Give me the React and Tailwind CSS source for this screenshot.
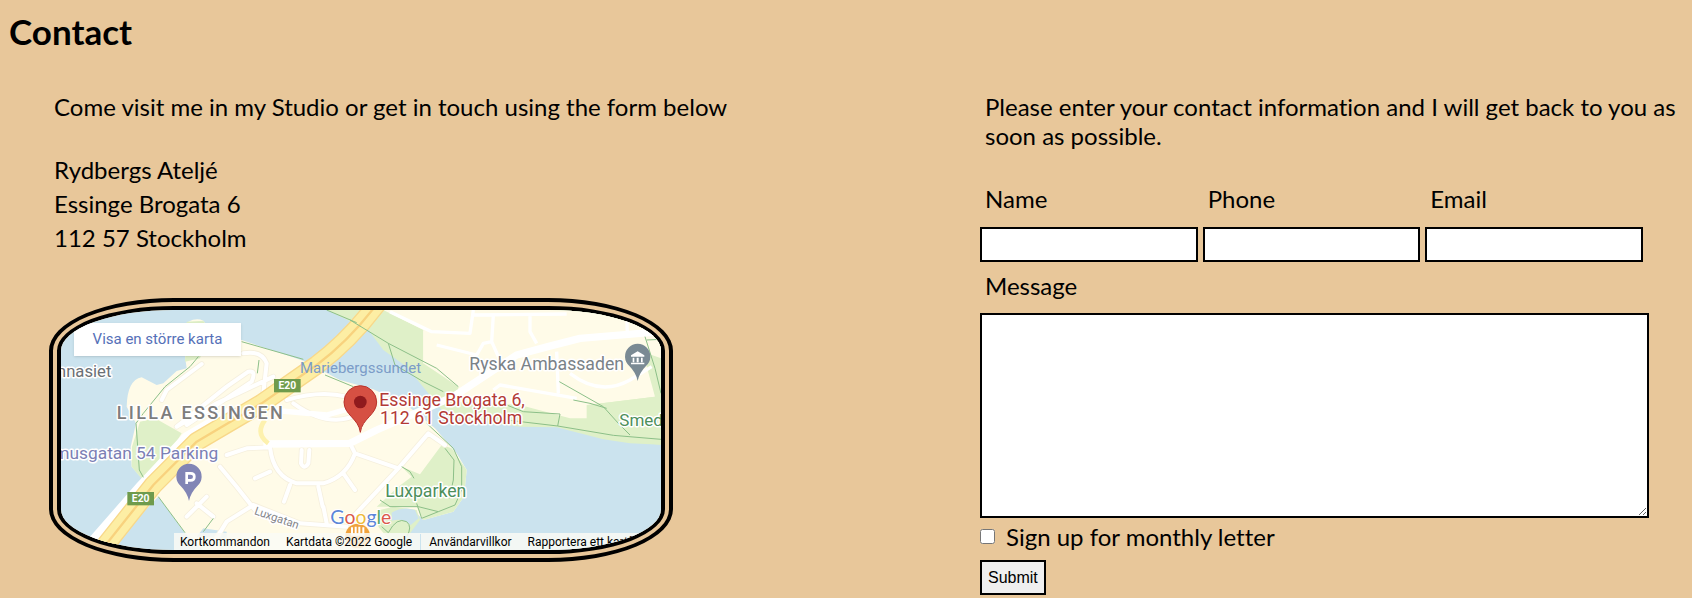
const halo = { paintOrder: "stroke", stroke: "#ffffff", strokeWidth: 9, strokeLinejoin: "round" };

const streets =
  "M485 222 L380 300 L365 330 M610 190 Q665 180 680 220 L670 310 L700 370 M410 410 L560 290 L625 245 Q650 240 635 275 L440 405 M410 410 L530 340 L700 260 M540 530 L590 590 L645 660 M640 645 L560 695 L520 760 M640 645 L780 700 L920 710 M560 495 L620 475 L690 472 Q700 560 770 580 L850 580 Q920 560 945 490 L930 460 M750 585 L732 635 M690 545 L645 565 M835 590 L848 650 M910 550 L945 600 M785 480 L783 520 Q793 540 805 520 L808 480 M760 340 Q870 420 960 370 M740 330 Q840 300 920 320 M500 620 L440 680 M470 640 L520 680 M945 490 L1075 535 L930 690 M1075 535 L1165 430 L1215 465 M850 650 L860 700";

function Shield({ x, y }) {
  return (
    <g>
      <rect x={x} y={y} width="80" height="40" fill="#6f9b4c" />
      <text x={x + 40} y={y + 31} fontSize="31" fontWeight="700" fill="#fff" textAnchor="middle">E20</text>
    </g>
  );
}

function MapDrawing() {
  return (
    <svg viewBox="63 60 1800 720" preserveAspectRatio="xMidYMid slice" className="block h-full w-full" fontFamily="Roboto, sans-serif" role="img" aria-label="Karta över Lilla Essingen">
      <rect x="63" y="60" width="1800" height="720" fill="#cbe3ee" />
      <path d="M445 95 Q470 82 490 92 L520 130 L605 150 L790 212 L900 270 L1000 298 L1100 345 L1185 415 L1250 490 L1280 540 L1272 620 L1240 665 L1150 690 L1120 660 L1060 680 L1030 730 L1110 690 L1115 720 L1060 790 L500 790 L435 730 L355 620 L190 790 L130 790 L310 570 L275 530 L272 470 L288 400 L260 350 Q262 270 305 262 L350 285 L370 280 L410 243 L440 235 L435 200 Z" fill="#fffbe8" />
      <path d="M300 395 L345 385 L425 430 L400 470 L310 572 L275 530 L276 470 Z M1085 530 L1140 553 L1205 465 L1235 475 L1280 540 L1272 620 L1240 665 L1150 690 L1130 650 L1010 650 L1075 590 L1115 560 Z M440 95 L490 92 L510 120 L480 205 L435 215 Z" fill="#dff0c8" />
      <path d="M920 60 L1863 60 L1863 464 L1770 460 L1690 448 L1550 412 L1440 410 L1225 385 L1165 310 L1100 230 L1030 180 L985 120 L860 60 Z" fill="#dff0c8" />
      <path d="M1030 60 L1863 60 L1863 280 L1845 320 L1640 345 L1640 385 L1590 385 L1440 345 L1250 335 L1255 290 L1150 220 L1150 120 Z" fill="#fffbe8" />
      <path d="M1808 185 L1863 205 L1863 464 L1770 455 L1640 400 L1645 345 L1845 320 Z" fill="#dff0c8" />
      <path d="M1150 120 L1230 210 L1150 220 Z" fill="#fffbe8" />
      <path d="M490 715 L560 725 L560 745 L470 740 Z" fill="#cbe3ee" />
      <path d="M1020 660 L1060 650 L1130 660 L1140 690 L1110 730 L1060 760 L1040 740 L1015 710 Z" fill="#dff0c8" />
      <path d="M1055 668 Q1090 648 1125 660 L1136 685 L1112 705 Q1090 682 1055 692 Z" fill="#cbe3ee" />

      <path d={streets} fill="none" stroke="#f6f0de" strokeWidth="17" strokeLinecap="round" strokeLinejoin="round" />
      <path d={streets} fill="none" stroke="#fff" strokeWidth="12" strokeLinecap="round" strokeLinejoin="round" />
      <path d="M1050 65 L1175 125 L1290 130 L1300 60 M1300 75 L1580 72 M1360 75 L1355 155 L1330 160 L1310 195 L1190 165 M1355 155 L1375 200 M1470 75 L1470 125 L1490 160 M1550 185 L1555 310 M1590 250 Q1680 320 1770 270 L1835 230 M1360 300 L1380 285 L1610 325 M1760 60 L1762 135" fill="none" stroke="#fff" strokeWidth="10" strokeLinejoin="round" />
      <path d="M670 462 L930 460 L1010 420 L1240 320 L1430 195 Q1520 170 1620 145 L1863 125" fill="none" stroke="#fff" strokeWidth="22" strokeLinejoin="round" />
      <path d="M690 360 L860 375 L930 355" fill="none" stroke="#fff" strokeWidth="16" />
      <path d="M675 390 Q645 430 685 460" fill="none" stroke="#fdf1ae" strokeWidth="14" />
      <path d="M125 790 L300 590 L440 440 L570 365" fill="none" stroke="#fff" strokeWidth="28" />
      <g fill="none" strokeLinejoin="round">
        <path d="M1012 40 Q930 150 830 225 L665 340 L470 455 L340 585 L185 780" stroke="#f8d88a" strokeWidth="58" />
        <path d="M1012 40 Q930 150 830 225 L665 340 L470 455 L340 585 L185 780" stroke="#fdeea4" strokeWidth="50" />
        <path d="M1012 40 Q930 150 830 225 L665 340 L470 455 L340 585 L185 780" stroke="#f8d27e" strokeWidth="7" />
      </g>
      <g fill="none" stroke="#8cbf88" strokeWidth="3">
        <path d="M860 60 L950 98 M605 155 L790 208 M855 255 L940 290 M657 210 L652 250 M475 200 L450 230 L375 290 L310 370 L288 400 L298 540 L310 562 M355 620 L435 728 M520 685 L490 725" />
        <path d="M930 90 L1045 160 L1190 235 L1255 290 M1045 160 L1065 225 L1150 275 L1210 305 M1558 275 L1690 350 L1735 400 L1770 435 M1600 330 L1650 340 L1700 355 M1400 345 L1450 365 L1560 372 L1553 408 L1400 390 M1553 408 L1720 436 L1863 448 M1815 140 L1845 235 L1863 310 M1820 150 L1863 148" />
        <path d="M1160 400 L1240 475 L1265 530 L1265 600 L1245 645 L1195 665 L1135 650 L1050 650 L1020 630 M1195 665 L1145 685 L1130 640 M1215 475 L1242 510 L1240 570 L1228 625 M1085 530 L1110 545 L1122 565 M1025 710 L1045 728 Q1070 680 1100 695 Q1118 710 1100 740" />
      </g>

      <text x="214" y="261" fontSize="50" fill="#6b7075" style={halo} textAnchor="end">Gymnasiet</text>
      <text x="230" y="387" fontSize="54" fontWeight="500" fill="#7d7d7d" style={halo} letterSpacing="7">LILLA ESSINGEN</text>
      <text x="535" y="508" fontSize="52" fill="#7b80b4" style={halo} textAnchor="end">Primusgatan 54 Parking</text>
      <text x="780" y="249" fontSize="45" fill="#7b9cc8">Mariebergssundet</text>
      <text x="1288" y="240" fontSize="53" fill="#7a8287" style={halo}>Ryska Ambassaden</text>
      <text x="1738" y="407" fontSize="51" fill="#4d8f5b" style={halo}>Smedsudden</text>
      <text x="1036" y="621" fontSize="53" fill="#4d8f5b" style={halo}>Luxparken</text>
      <text transform="translate(641 672) rotate(19)" fontSize="34" fill="#85868a" style={halo}>Luxgatan</text>
      <text x="1018" y="348" fontSize="53" fill="#b33a35" style={halo}>Essinge Brogata 6,</text>
      <text x="1020" y="402" fontSize="53" fill="#b33a35" style={halo}>112 61 Stockholm</text>
      <Shield x={702} y={267} />
      <Shield x={262} y={606} />

      <path d="M447 633 Q442 608 422 588 A38 38 0 1 1 472 588 Q452 608 447 633 Z" fill="#8185b5" />
      <path d="M440 582 V550 H452 Q463 550 463 560 Q463 571 452 571 H440" fill="none" stroke="#fff" strokeWidth="8" />
      <path d="M1793 273 Q1788 248 1768 228 A38 38 0 1 1 1818 228 Q1798 248 1793 273 Z" fill="#7a8a94" />
      <path d="M1773 196 L1793 184 L1813 196 V200 H1773 Z M1778 203 h5 v14 h-5 Z M1790 203 h6 v14 h-6 Z M1803 203 h5 v14 h-5 Z M1773 218 h40 v5 h-40 Z" fill="#fff" />
      <path d="M961 427 C956 385 912 375 912 336 A49 49 0 0 1 1010 336 C1010 375 966 385 961 427 Z" fill="#d65043" stroke="#b8332c" strokeWidth="3" />
      <circle cx="961" cy="336" r="19" fill="#8f1a1d" />

      <circle cx="953" cy="738" r="37" fill="#f0a23c" />
      <path d="M936 712 v22 h34 v-22 M947 710 v22 M958 710 v22" fill="none" stroke="#fff" strokeWidth="6" />
      <text x="871" y="702" fontSize="58" fontFamily="Lato, sans-serif" style={{ ...halo, strokeWidth: 6 }}>
        <tspan fill="#5b86d8">G</tspan><tspan fill="#db5a4c">o</tspan><tspan fill="#eebb3b">o</tspan><tspan fill="#5b86d8">g</tspan><tspan fill="#55a868">l</tspan><tspan fill="#db5a4c">e</tspan>
      </text>
    </svg>
  );
}

function StudioMap() {
  return (
    <div className="relative h-[264px] w-full max-w-[624px] overflow-hidden rounded-[20%] border-[12px] border-double border-black font-[Roboto,sans-serif]">
      <MapDrawing />
      <a href="#karta" className="absolute left-[13px] top-[13px] flex h-[33px] w-[167px] items-center justify-center bg-white text-[15px] text-[#5570b8] shadow-sm">
        Visa en större karta
      </a>
      <div className="absolute bottom-0 left-[113px] right-0 flex h-[17px] items-center gap-4 overflow-hidden whitespace-nowrap bg-[#fafaf5]/85 pl-[6px] text-[12px] leading-4 text-black">
        <button type="button">Kortkommandon</button>
        <span>Kartdata ©2022 Google</span>
        <a href="#villkor" className="-ml-2 border-l border-[#cbe3ee] pl-2">Användarvillkor</a>
        <a href="#fel">Rapportera ett kartfel</a>
      </div>
    </div>
  );
}

function Field({ id, label, type }) {
  return (
    <div className="min-w-0">
      <label htmlFor={id} className="block pl-[5px]">{label}</label>
      <input id={id} type={type} className="mt-[14px] block h-[35px] w-full border-2 border-black bg-white px-1 text-base outline-none" />
    </div>
  );
}

export default function App() {
  return (
    <main className="min-h-screen bg-[#e8c79a] pb-[3px] pt-3 font-[Lato,sans-serif] text-[24px] leading-[29px] text-black [font-variant-ligatures:none]">
      <h1 className="pl-[9px] text-[35px] font-bold leading-[38px]">Contact</h1>
      <div className="mt-[42px] grid grid-cols-[980fr_712fr]">
        <section className="pl-[49px]">
          <p className="pl-[5px]">Come visit me in my Studio or get in touch using the form below</p>
          <address className="mb-[43px] mt-8 pl-[5px] not-italic leading-[34px]">
            Rydbergs Ateljé<br />
            Essinge Brogata 6<br />
            112 57 Stockholm
          </address>
          <StudioMap />
        </section>
        <form onSubmit={(event) => event.preventDefault()}>
          <p className="pl-[5px]">Please enter your contact information and I will get back to you as soon as possible.</p>
          <div className="mr-[43px] mt-[34px]">
            <div className="grid grid-cols-3 gap-[5px] pr-[6px]">
              <Field id="name" label="Name" type="text" />
              <Field id="phone" label="Phone" type="tel" />
              <Field id="email" label="Email" type="email" />
            </div>
            <label htmlFor="message" className="mt-[9px] block pl-[5px]">Message</label>
            <textarea id="message" className="mt-[13px] block h-[205px] w-full border-2 border-black bg-white p-1 text-base outline-none" />
            <div className="mt-1 flex items-center gap-[11px]">
              <input id="letter" type="checkbox" className="h-[15px] w-[15px]" />
              <label htmlFor="letter">Sign up for monthly letter</label>
            </div>
            <button type="submit" className="mt-[9px] block h-[35px] border-2 border-black bg-[#efefef] px-[6px] font-['Liberation_Sans',sans-serif] text-base leading-none">Submit</button>
          </div>
        </form>
      </div>
    </main>
  );
}
